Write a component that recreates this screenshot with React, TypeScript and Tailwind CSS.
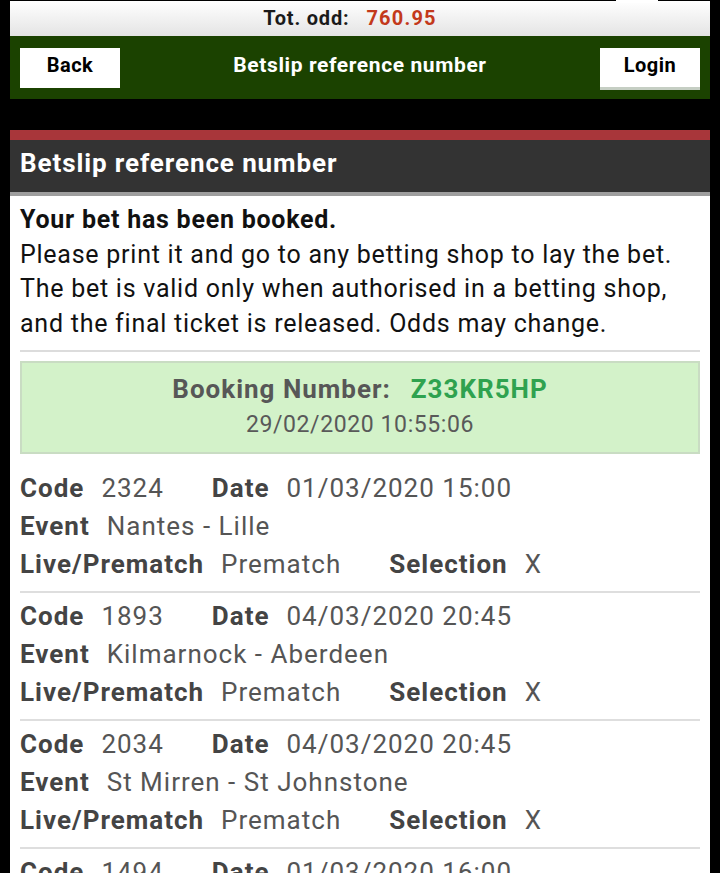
import React from "react";

const rows = [
  { code: "2324", date: "01/03/2020 15:00", event: "Nantes - Lille" },
  { code: "1893", date: "04/03/2020 20:45", event: "Kilmarnock - Aberdeen" },
  { code: "2034", date: "04/03/2020 20:45", event: "St Mirren - St Johnstone" },
  { code: "1494", date: "01/03/2020 16:00", event: "Lazio - Bologna" },
];

export default function App() {
  return (
    <div
      className="min-h-[873px] w-[720px] bg-black overflow-hidden"
      style={{ fontFamily: "Roboto, 'Liberation Sans', sans-serif" }}
    >
      <div className="mx-[10px]">
        {/* top odds bar */}
        <div className="relative h-[35px] mt-px bg-gradient-to-b from-white to-[#e4e4e4] flex items-center justify-center gap-[17px] text-[20px] font-bold leading-none pb-[2px] pr-[20px]">
          <div className="absolute top-[-1px] left-[606px] w-[42px] h-[3px] bg-white" />
          <span className="text-[#1a1a1a] tracking-[0.8px]">Tot. odd:</span>
          <span className="text-[#c3391b] tracking-[1.2px]">760.95</span>
        </div>
        {/* green nav */}
        <div className="h-[63px] bg-[#1b4200] flex items-start justify-between px-[10px] pt-[12px]">
          <div className="w-[100px] h-[40px] bg-white flex items-center justify-center text-[20px] tracking-[0.5px] font-bold text-black pb-[6px]">
            Back
          </div>
          <div className="h-[40px] flex items-center text-[21px] tracking-[0.6px] font-bold text-white pb-[5px]">
            Betslip reference number
          </div>
          <div className="w-[100px] h-[42px] bg-white border-b-[3px] border-[#c5cec3] flex items-center justify-center text-[20px] tracking-[0.5px] font-bold text-black pb-[5px]">
            Login
          </div>
        </div>
        {/* gap */}
        <div className="h-[31px]" />
        {/* section */}
        <div className="h-[10px] bg-[#a8363a]" />
        <div className="h-[52px] bg-[#333333] flex items-center px-[10px] pb-[5px] text-[26px] tracking-[0.9px] font-bold text-white">
          Betslip reference number
        </div>
        <div className="h-[4px] bg-[#9e9e9e]" />
        <div className="bg-white px-[10px] pb-[40px]">
          <div className="pt-[7px] pb-[9px] text-[25px] tracking-[0.75px] leading-[34.5px] text-[#111] whitespace-nowrap">
            <div className="font-bold">Your bet has been booked.</div>
            <div>Please print it and go to any betting shop to lay the bet.</div>
            <div>The bet is valid only when authorised in a betting shop,</div>
            <div>and the final ticket is released. Odds may change.</div>
          </div>
          <div className="h-[2px] bg-[#dcdcdc]" />
          <div className="mt-[9px] h-[93px] bg-[#d3f2c9] border-2 border-[#c9dcc3] flex flex-col items-center pt-[9px]">
            <div className="flex gap-[20px] text-[26px] tracking-[1px] font-bold leading-[34px]">
              <span className="text-[#575757]">Booking Number:</span>
              <span className="text-[#2fa24f]">Z33KR5HP</span>
            </div>
            <div className="text-[23px] tracking-[0.6px] leading-[34px] mt-[2px] text-[#595959]">29/02/2020 10:55:06</div>
          </div>
          <div className="mt-[11px]">
            {rows.map((r) => (
              <div
                key={r.code}
                className="pt-[4px] pb-[8px] border-b-2 border-[#dedede] text-[26px] tracking-[1px] leading-[38px] whitespace-nowrap"
              >
                <div className="flex">
                  <span className="font-bold text-[#444] mr-[17px]">Code</span>
                  <span className="text-[#555] mr-[48px]">{r.code}</span>
                  <span className="font-bold text-[#444] mr-[17px]">Date</span>
                  <span className="text-[#555]">{r.date}</span>
                </div>
                <div className="flex">
                  <span className="font-bold text-[#444] mr-[17px]">Event</span>
                  <span className="text-[#555]">{r.event}</span>
                </div>
                <div className="flex">
                  <span className="font-bold text-[#444] mr-[17px]">Live/Prematch</span>
                  <span className="text-[#555] mr-[48px]">Prematch</span>
                  <span className="font-bold text-[#444] mr-[17px]">Selection</span>
                  <span className="text-[#555]">X</span>
                </div>
              </div>
            ))}
          </div>
        </div>
      </div>
    </div>
  );
}
